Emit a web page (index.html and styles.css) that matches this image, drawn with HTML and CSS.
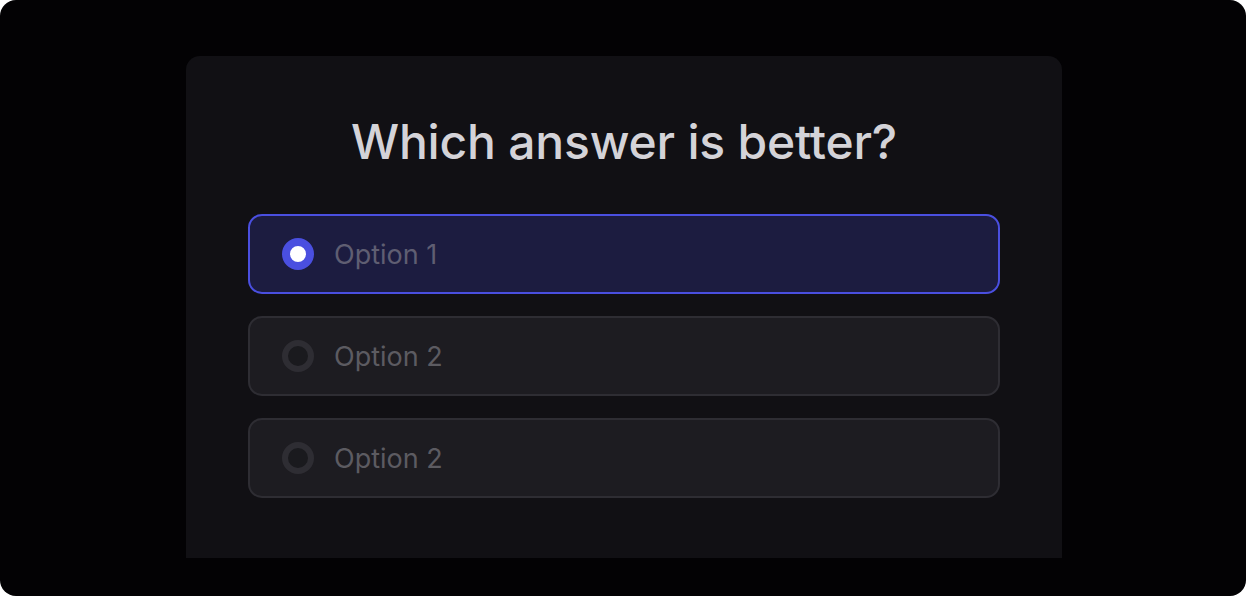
FILE: index.html
```html
<!DOCTYPE html>
<html lang="en">
<head>
    <meta charset="UTF-8">
    <meta name="viewport" content="width=device-width, initial-scale=1.0">
    <title>Which answer is better?</title>
    <link rel="stylesheet" href="styles.css">
</head>
<body>
    <div class="frame">
        <div class="card">
            <h1 class="question">Which answer is better?</h1>

            <div class="options">
                <label class="option selected">
                    <span class="radio"></span>
                    <span class="option-text">Option 1</span>
                </label>
                <label class="option">
                    <span class="radio"></span>
                    <span class="option-text">Option 2</span>
                </label>
                <label class="option">
                    <span class="radio"></span>
                    <span class="option-text">Option 2</span>
                </label>
            </div>
        </div>
    </div>
</body>
</html>
```

FILE: styles.css
```css
html, body {
    margin: 0;
    padding: 0;
    background: #ffffff;
}
body {
    font-family: Inter, "Noto Sans", Arial, sans-serif;
}
.frame {
    width: 1246px;
    height: 596px;
    box-sizing: border-box;
    background-color: #030204;
    border-radius: 16px;
    padding: 56px 0 0 186px;
    overflow: hidden;
}
.card {
    width: 876px;
    height: 502px;
    box-sizing: border-box;
    background-color: #111014;
    border-radius: 14px 14px 0 0;
    padding: 58px 62px 0;
}
.question {
    margin: 0 0 44px;
    text-align: center;
    font-size: 48px;
    font-weight: 500;
    line-height: 56px;
    color: #d4d3d8;
    letter-spacing: -0.2px;
}
.options {
    display: flex;
    flex-direction: column;
    gap: 22px;
}
.option {
    display: flex;
    align-items: center;
    height: 80px;
    box-sizing: border-box;
    padding: 0 32px;
    background-color: #1d1c21;
    border: 2px solid #2e2d33;
    border-radius: 14px;
    cursor: pointer;
}
.option.selected {
    background-color: #1c1c40;
    border-color: #4a4fe0;
}
.radio {
    width: 32px;
    height: 32px;
    box-sizing: border-box;
    border-radius: 50%;
    border: 6px solid #2e2d33;
    background-color: #1a1a1e;
    margin-right: 20px;
    flex-shrink: 0;
}
.option.selected .radio {
    border: 8px solid #4a4fe0;
    background-color: #ffffff;
}
.option-text {
    font-size: 27px;
    color: #5c5b61;
}
.option.selected .option-text {
    color: #5f5e72;
}
```
